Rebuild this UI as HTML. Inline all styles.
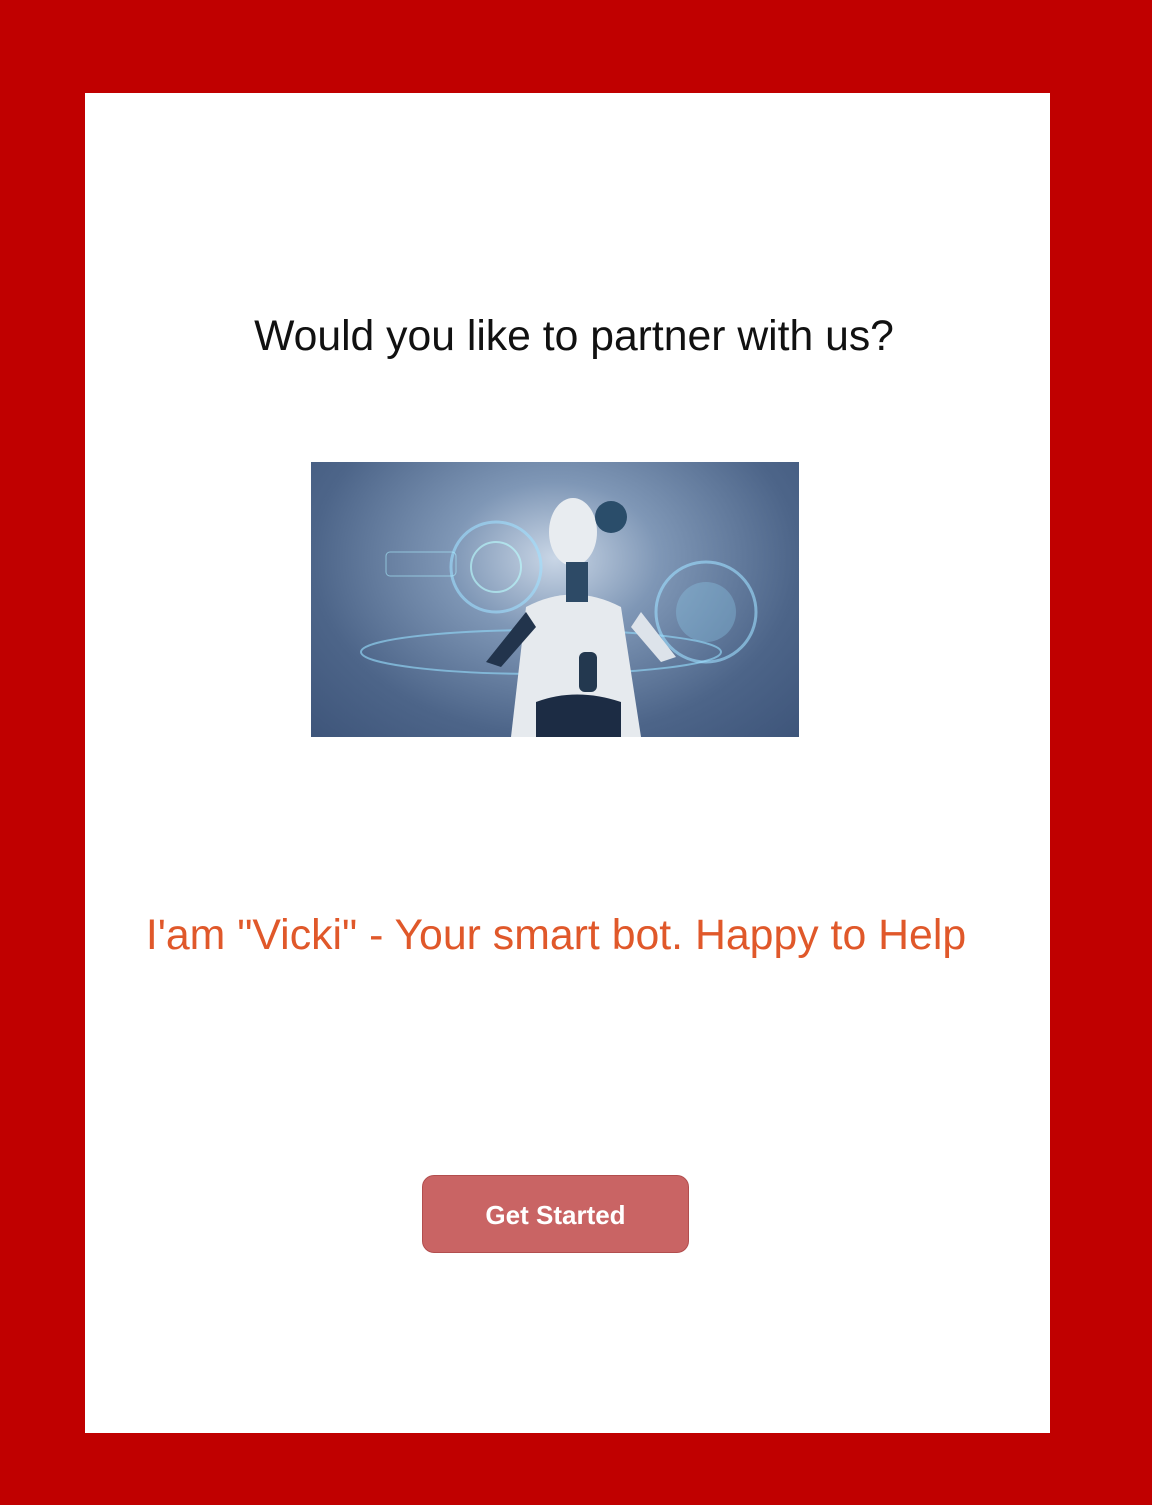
<!DOCTYPE html>
<html><head><style>
html,body{margin:0;padding:0}
body{width:1152px;height:1505px;background:#C00000;position:relative;overflow:hidden;font-family:"Liberation Sans",Arial,sans-serif}
.panel{position:absolute;left:85px;top:93px;width:965px;height:1340px;background:#fff}
.h{position:absolute;left:0;width:1152px;text-align:center;white-space:nowrap}
.img{position:absolute;left:311px;top:462px;width:488px;height:275px;background:radial-gradient(ellipse at 50% 35%,#c9d6e6 0%,#7f97b6 30%,#4d6589 70%,#3e557a 100%);overflow:hidden}
.btn{position:absolute;left:422px;top:1175px;width:265px;height:76px;background:#C96464;border:1px solid #b24e4e;border-radius:12px;color:#fff;font:bold 26px "Liberation Sans",sans-serif;text-align:center;line-height:78px}
</style></head><body>
<div class="panel"></div>
<div class="h" style="top:312px;font-size:42.7px;color:#111;left:-2px">Would you like to partner with us?</div>
<div class="img">
<svg width="488" height="275" viewBox="0 0 488 275">
<ellipse cx="230" cy="190" rx="180" ry="22" fill="none" stroke="#8fd0f0" stroke-width="2" opacity=".7"/>
<circle cx="185" cy="105" r="45" fill="none" stroke="#9fe0ff" stroke-width="3" opacity=".6"/>
<circle cx="185" cy="105" r="25" fill="none" stroke="#bff" stroke-width="2" opacity=".6"/>
<circle cx="395" cy="150" r="50" fill="none" stroke="#9fe0ff" stroke-width="3" opacity=".6"/>
<circle cx="395" cy="150" r="30" fill="#8cc8e8" opacity=".35"/>
<rect x="75" y="90" width="70" height="24" rx="4" fill="none" stroke="#aef" opacity=".6"/>
<ellipse cx="262" cy="70" rx="24" ry="34" fill="#e8ecf0"/>
<circle cx="300" cy="55" r="16" fill="#2a4d6a"/>
<path d="M215 145 Q262 120 310 145 L330 275 L200 275 Z" fill="#e6eaee"/>
<rect x="255" y="100" width="22" height="40" fill="#2d4a66"/>
<rect x="268" y="190" width="18" height="40" rx="6" fill="#23384f"/>
<path d="M215 150 L175 200 L190 205 L225 165Z" fill="#22344c"/>
<path d="M330 150 L365 195 L350 200 L320 165Z" fill="#dde3ea"/>
<path d="M225 240 Q265 225 310 240 L310 275 L225 275Z" fill="#1c2c44"/>
</svg>
</div>
<div class="h" style="top:911px;font-size:42.8px;color:#E0582A;left:-20px">I'am "Vicki" - Your smart bot. Happy to Help</div>
<div class="btn">Get Started</div>
</body></html>
